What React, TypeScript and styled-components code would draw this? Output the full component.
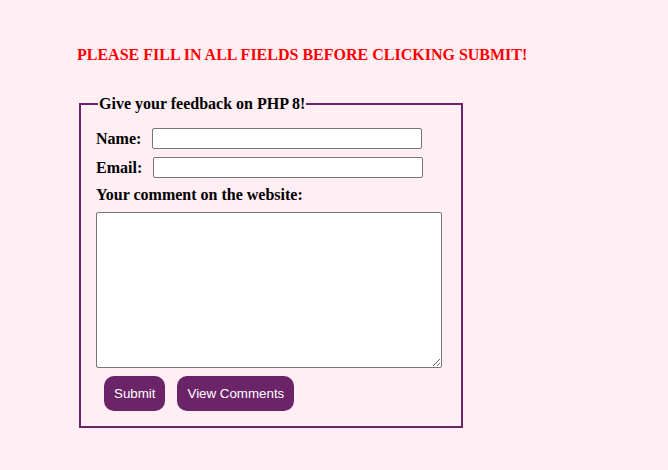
import React from "react";
import styled, { createGlobalStyle } from "styled-components";

const Global = createGlobalStyle`
  html, body { margin: 0; padding: 0; background: #ffeef4; }
  body { font-family: "Liberation Serif", "Times New Roman", serif; color: #000; }
`;

const Page = styled.div`
  padding: 46px 0 0 77px;
  min-height: 470px;
  box-sizing: border-box;
`;

const Warning = styled.h4`
  margin: 0 0 31px 0;
  color: #ff0000;
  font-size: 16px;
  font-weight: bold;
`;

const Fieldset = styled.fieldset`
  margin: 0 0 0 2px;
  width: 384px;
  box-sizing: border-box;
  border: 2px solid #6b2468;
  padding: 15px 18px 15px 15px;
  display: flex;
  flex-direction: column;
`;

const Legend = styled.legend`
  font-weight: bold;
  font-size: 16px;
  padding: 0 1px;
  margin-left: 2px;
`;

const Row = styled.div<{ $mb: number }>`
  display: flex;
  align-items: center;
  margin-bottom: ${(p) => p.$mb}px;
`;

const Label = styled.label<{ $w?: number }>`
  font-weight: bold;
  font-size: 16px;
  ${(p) => (p.$w ? `width: ${p.$w}px;` : "")}
`;

const TextInput = styled.input`
  width: 270px;
  height: 21px;
  box-sizing: border-box;
  border: 1px solid #767676;
  border-radius: 2px;
  background: #fff;
  padding: 1px 2px;
  font-size: 13px;
`;

const CommentLabel = styled.label`
  display: block;
  font-weight: bold;
  font-size: 16px;
  margin-bottom: 8px;
`;

const TextArea = styled.textarea`
  width: 346px;
  height: 156px;
  box-sizing: border-box;
  border: 1px solid #767676;
  border-radius: 2px;
  background: #fff;
  display: block;
  margin: 0;
`;

const Buttons = styled.div`
  display: flex;
  gap: 12px;
  padding-left: 8px;
  margin-top: 8px;
`;

const Button = styled.button`
  height: 35px;
  padding: 0 10px;
  border: none;
  border-radius: 10px;
  background: #6b2468;
  color: #fff;
  font-family: "Liberation Sans", Arial, sans-serif;
  font-size: 13.333px;
  cursor: pointer;
`;

export default function App() {
  return (
    <>
      <Global />
      <Page>
        <Warning>PLEASE FILL IN ALL FIELDS BEFORE CLICKING SUBMIT!</Warning>
        <Fieldset>
          <Legend>Give your feedback on PHP 8!</Legend>
          <Row $mb={8}>
            <Label $w={56}>Name:</Label>
            <TextInput type="text" />
          </Row>
          <Row $mb={8}>
            <Label $w={57}>Email:</Label>
            <TextInput type="text" />
          </Row>
          <CommentLabel>Your comment on the website:</CommentLabel>
          <TextArea />
          <Buttons>
            <Button>Submit</Button>
            <Button>View Comments</Button>
          </Buttons>
        </Fieldset>
      </Page>
    </>
  );
}
